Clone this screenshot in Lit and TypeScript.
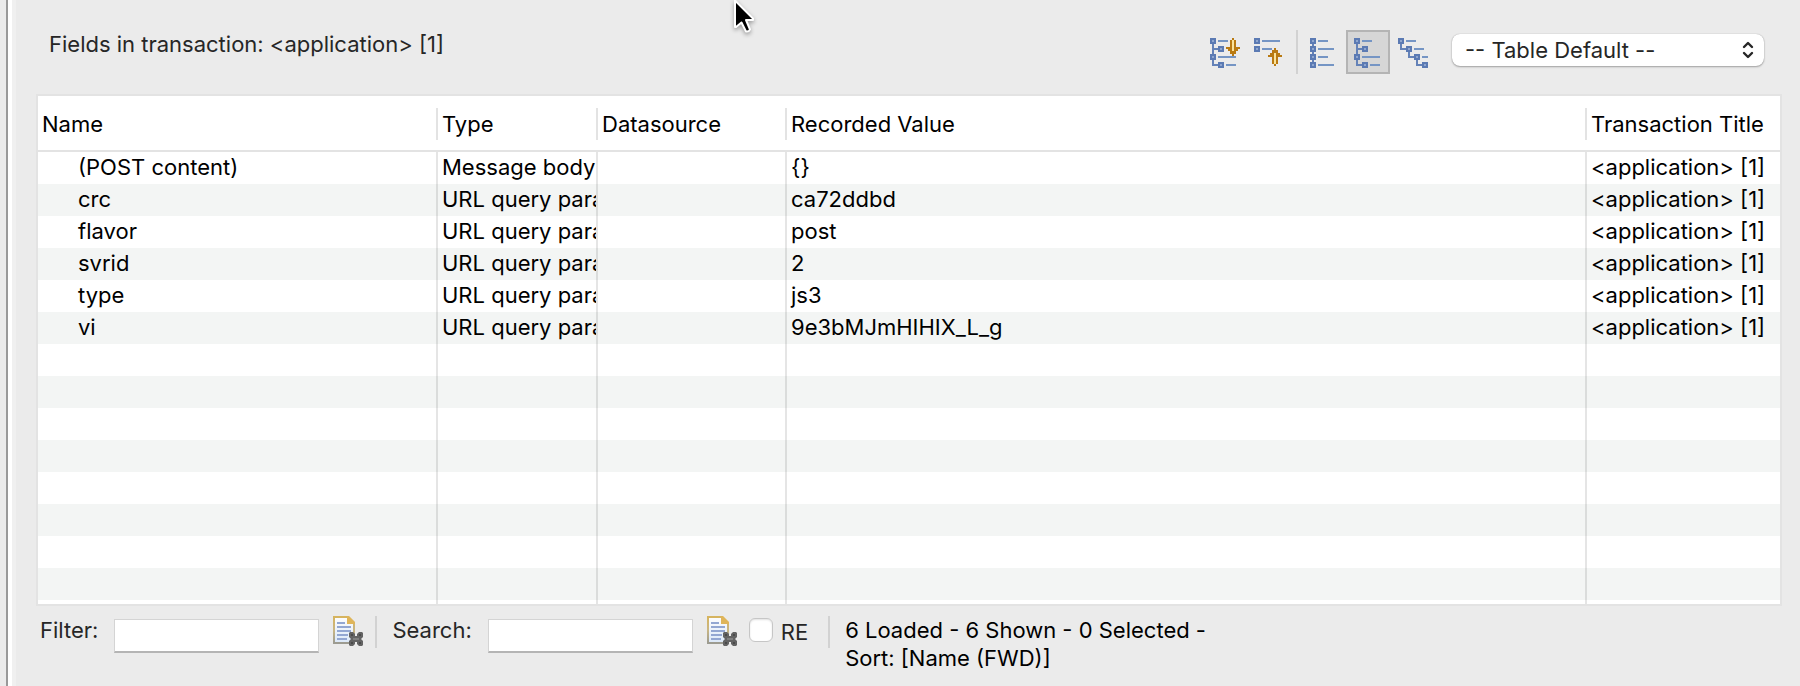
import { LitElement, html, svg, css, nothing } from "lit";
import { customElement, property, state } from "lit/decorators.js";
import { classMap } from "lit/directives/class-map.js";

interface Field {
  name: string;
  type: string;
  datasource: string;
  value: string;
  title: string;
}

const TITLE = "<application> [1]";
const QUERY = "URL query parameter";

const FIELDS: Field[] = [
  { name: "(POST content)", type: "Message body", datasource: "", value: "{}", title: TITLE },
  { name: "crc", type: QUERY, datasource: "", value: "ca72ddbd", title: TITLE },
  { name: "flavor", type: QUERY, datasource: "", value: "post", title: TITLE },
  { name: "svrid", type: QUERY, datasource: "", value: "2", title: TITLE },
  { name: "type", type: QUERY, datasource: "", value: "js3", title: TITLE },
  { name: "vi", type: QUERY, datasource: "", value: "9e3bMJmHIHIX_L_g", title: TITLE },
];

const VISIBLE_ROWS = 14;

// Building blocks of the tree icons: a node box, a caption dash and connectors.
const node = (x: number, y: number) => svg`
  <rect x=${x + 1} y=${y + 1} width="4" height="4" fill="#8fa6cf" stroke="#5b7ab3" stroke-width="2"></rect>`;
const dash = (x: number, y: number, w: number) => svg`
  <rect x=${x} y=${y} width=${w} height="2" fill="#7595c4"></rect>`;
const link = (d: string) => svg`
  <path d=${d} fill="none" stroke="#6482b8" stroke-width="2"></path>`;

const treeShape = svg`
  ${link("M5 6V29H12M5 13H12")}
  ${node(2, 2)}${node(10, 10)}${node(2, 18)}${node(10, 26)}
  ${dash(10, 4, 10)}${dash(10, 20, 18)}${dash(18, 28, 10)}`;

const ICONS = {
  expand: svg`
    ${treeShape}
    <path d="M24 2H26V4H28V11H32V13H30V15H28V18H26V20H24V18H22V15H20V13H18V11H22V4H24Z" fill="#b97a12"></path>
    <path d="M24 4H26V15H24Z" fill="#fbe39a"></path>`,
  collapse: svg`
    ${node(2, 2)}${node(2, 10)}
    ${dash(10, 4, 18)}${dash(10, 12, 10)}
    <path d="M22 30H24V28H26V21H30V19H28V17H26V14H24V12H22V14H20V17H18V19H16V21H20V28H22Z" fill="#b97a12"></path>
    <path d="M22 17H24V28H22Z" fill="#fbe39a"></path>`,
  flat: svg`
    ${link("M5 6V28")}
    ${node(2, 2)}${node(2, 10)}${node(2, 18)}${node(2, 26)}
    ${dash(10, 4, 10)}${dash(10, 12, 16)}${dash(10, 20, 10)}${dash(10, 28, 16)}`,
  tree: treeShape,
  cascade: svg`
    ${link("M5 6V13H12M13 13V21H20M21 21V29H28")}
    ${node(2, 2)}${node(10, 10)}${node(18, 18)}${node(26, 26)}
    ${dash(10, 4, 10)}${dash(18, 12, 10)}${dash(26, 20, 6)}`,
};

type IconName = keyof typeof ICONS;

@customElement("tool-button")
export class ToolButton extends LitElement {
  @property() icon: IconName = "tree";
  @property() label = "";
  @property({ type: Boolean }) active = false;

  static styles = css`
    :host {
      display: block;
    }
    .button {
      display: block;
      box-sizing: border-box;
      padding: 4px;
      border: 2px solid transparent;
      background: none;
    }
    .button.active {
      border-color: #b4b4b4;
      background: #d6d6d6;
    }
    .icon {
      display: block;
    }
  `;

  render() {
    return html`<button
      class=${classMap({ button: true, active: this.active })}
      type="button"
      aria-label=${this.label}
      aria-pressed=${this.active ? "true" : "false"}
    >
      <svg class="icon" width="32" height="32" viewBox="0 0 32 32" aria-hidden="true">${ICONS[this.icon]}</svg>
    </button>`;
  }
}

@customElement("clear-button")
export class ClearButton extends LitElement {
  @property() label = "";

  static styles = css`
    :host {
      display: block;
    }
    .button {
      display: block;
      padding: 0;
      border: 0;
      background: none;
    }
    .icon {
      display: block;
    }
  `;

  render() {
    return html`<button class="button" type="button" aria-label=${this.label}>
      <svg class="icon" width="32" height="32" viewBox="0 0 32 32" aria-hidden="true">
        <defs>
          <linearGradient id="edge" x1="0" y1="0" x2="0" y2="1">
            <stop offset="0" stop-color="#d6b45f"></stop>
            <stop offset="0.5" stop-color="#c9b684"></stop>
            <stop offset="1" stop-color="#9c9b91"></stop>
          </linearGradient>
          <linearGradient id="sheet" x1="0" y1="0" x2="0" y2="1">
            <stop offset="0" stop-color="#fdfdfd"></stop>
            <stop offset="1" stop-color="#dbe8f8"></stop>
          </linearGradient>
        </defs>
        <path d="M3 1H17L23 7V27H3Z" fill="url(#sheet)" stroke="url(#edge)" stroke-width="2"></path>
        <path d="M16 0H18L24 6V8H16Z" fill="#dfb55a"></path>
        <path d="M6 7H14M6 11H20M6 15H20M6 19H17M6 23H16" stroke="#93a7d2" stroke-width="2"></path>
        <path
          d="M19 16H22L24 18V20H26V18L28 16H31L32 17V21L30 23L32 25V29L31 30H28L26 28V26H24V28L22 30H19L18 29V25L20 23L18 21V17Z"
          fill="#636363"
        ></path>
        <path d="M20 18H22V20H20ZM28 18H30V20H28ZM20 26H22V28H20ZM28 26H30V28H28Z" fill="#4a4a4a"></path>
        <path d="M22 22H28V24H22Z" fill="#808080"></path>
      </svg>
    </button>`;
  }
}

@customElement("field-table")
export class FieldTable extends LitElement {
  @property({ attribute: false }) fields: Field[] = [];
  @property({ type: Number }) rows = 0;

  static styles = css`
    :host {
      display: block;
      border: 2px solid #e3e3e3;
      background: #fff;
      color: #000;
    }
    .table {
      width: 100%;
      table-layout: fixed;
      border-collapse: separate;
      border-spacing: 0;
    }
    .name {
      width: 400px;
    }
    .type {
      width: 160px;
    }
    .datasource {
      width: 189px;
    }
    .title {
      width: 193px;
    }
    .head {
      padding: 12px 0 10px 4px;
      border-bottom: 2px solid #e3e3e3;
      font-weight: 400;
      text-align: left;
    }
    .caption {
      display: block;
      height: 32px;
      line-height: 32px;
      border-right: 2px solid #e3e3e3;
      white-space: nowrap;
    }
    .head:last-child .caption {
      border-right: 0;
    }
    .cell {
      box-sizing: border-box;
      height: 32px;
      padding: 0 0 2px 4px;
      border-right: 2px solid rgba(0, 0, 0, 0.1);
      line-height: 30px;
      white-space: nowrap;
      overflow: hidden;
    }
    .cell:first-child {
      padding-left: 40px;
    }
    .cell:last-child {
      border-right: 0;
    }
    .row:nth-child(even) {
      background: #f3f5f4;
    }
    .tail {
      height: 4px;
      padding: 0;
      border-right: 2px solid rgba(0, 0, 0, 0.1);
    }
    .tail:last-child {
      border-right: 0;
    }
  `;

  render() {
    const blanks = Array.from({ length: Math.max(0, this.rows - this.fields.length) });
    const columns = [0, 1, 2, 3, 4];
    return html`<table class="table">
      <colgroup>
        <col class="name" />
        <col class="type" />
        <col class="datasource" />
        <col />
        <col class="title" />
      </colgroup>
      <thead>
        <tr>
          ${["Name", "Type", "Datasource", "Recorded Value", "Transaction Title"].map(
            (text) => html`<th class="head" scope="col"><span class="caption">${text}</span></th>`
          )}
        </tr>
      </thead>
      <tbody>
        ${this.fields.map(
          (f) => html`<tr class="row">
            ${[f.name, f.type, f.datasource, f.value, f.title].map((text) => html`<td class="cell">${text}</td>`)}
          </tr>`
        )}
        ${blanks.map(
          () => html`<tr class="row" aria-hidden="true">
            ${columns.map(() => html`<td class="cell"></td>`)}
          </tr>`
        )}
      </tbody>
      <tfoot aria-hidden="true">
        <tr>
          ${columns.map(() => html`<td class="tail"></td>`)}
        </tr>
      </tfoot>
    </table>`;
  }
}

@customElement("app-root")
export class AppRoot extends LitElement {
  @state() private mode: IconName = "tree";

  static styles = css`
    :host {
      display: flex;
      position: relative;
      min-height: 100vh;
      background: #ebebeb;
      color: #262626;
      font-family: Inter, "Liberation Sans", sans-serif;
      font-size: 22px;
      line-height: 28px;
    }
    .rail {
      flex: none;
      width: 6px;
      border-right: 2px solid #999;
    }
    .panel {
      flex: 1;
      min-width: 0;
      padding: 0 18px 0 24px;
      border-left: 4px solid #fff;
      box-shadow: inset 4px 0 #f0f0f0;
    }
    .header {
      display: flex;
      align-items: flex-start;
      padding: 30px 18px 20px 13px;
    }
    .heading {
      flex: 1;
      margin: 0;
      font-size: 22px;
      font-weight: 400;
    }
    .tools {
      display: flex;
      margin-right: 18px;
    }
    .rule {
      width: 2px;
      margin: 0 4px 0 6px;
      background: #d2d2d2;
    }
    .picker {
      display: grid;
      align-items: center;
      width: 312px;
      margin-top: 4px;
    }
    .select {
      grid-area: 1 / 1;
      appearance: none;
      height: 32px;
      padding: 0 32px 0 13px;
      border: 0;
      border-radius: 8px;
      background: #fff;
      box-shadow: 0 0 1px rgba(0, 0, 0, 0.3), 0 1px 2px rgba(0, 0, 0, 0.3);
      color: #262626;
      font: inherit;
    }
    .chevrons {
      grid-area: 1 / 1;
      justify-self: end;
      margin-right: 10px;
      pointer-events: none;
    }
    .footer {
      display: flex;
      align-items: flex-start;
      padding: 10px 0 16px 4px;
    }
    .label {
      padding-right: 16px;
    }
    .input {
      box-sizing: border-box;
      width: 205px;
      height: 34px;
      margin: 3px 12px 0 0;
      padding: 0 6px;
      border: 1px solid #d4d4d4;
      border-bottom: 2px solid #b4b4b4;
      border-radius: 0;
      background: #fff;
      font: inherit;
    }
    .split {
      width: 2px;
      height: 32px;
      margin: 0 15px 0 12px;
      background: #d2d2d2;
    }
    .regex {
      display: flex;
      gap: 8px;
      margin: 2px 8px 0 12px;
    }
    .check {
      appearance: none;
      width: 24px;
      height: 24px;
      margin: 0;
      border: 1px solid #c6c6c6;
      border-radius: 6px;
      background: #fff;
      box-shadow: inset 0 1px 2px rgba(0, 0, 0, 0.12);
      box-sizing: border-box;
    }
    .status {
      margin: 0;
      color: #000;
    }
    .pointer {
      position: absolute;
      top: 0;
      left: 730px;
      pointer-events: none;
      filter: drop-shadow(0 2px 2px rgba(0, 0, 0, 0.35));
    }
  `;

  private tool(icon: IconName, label: string, selectable = true) {
    return html`<tool-button
      icon=${icon}
      label=${label}
      ?active=${this.mode === icon}
      @click=${selectable ? () => (this.mode = icon) : nothing}
    ></tool-button>`;
  }

  render() {
    return html`
      <div class="rail"></div>
      <main class="panel">
        <header class="header">
          <h1 class="heading">Fields in transaction: ${TITLE}</h1>
          <div class="tools" role="toolbar" aria-label="View">
            ${this.tool("expand", "Expand all", false)} ${this.tool("collapse", "Collapse all", false)}
            <span class="rule"></span>
            ${this.tool("flat", "Flat list")} ${this.tool("tree", "Tree")} ${this.tool("cascade", "Full tree")}
          </div>
          <div class="picker">
            <select class="select" aria-label="Table layout">
              <option>-- Table Default --</option>
            </select>
            <svg class="chevrons" width="12" height="18" viewBox="0 0 12 18" aria-hidden="true">
              <path
                d="M2 6L6 2L10 6M2 12L6 16L10 12"
                fill="none"
                stroke="#262626"
                stroke-width="2.4"
                stroke-linecap="round"
                stroke-linejoin="round"
              ></path>
            </svg>
          </div>
        </header>
        <field-table .fields=${FIELDS} .rows=${VISIBLE_ROWS}></field-table>
        <footer class="footer">
          <label class="label" for="filter">Filter:</label>
          <input class="input" id="filter" type="text" />
          <clear-button label="Clear filter"></clear-button>
          <span class="split"></span>
          <label class="label" for="search">Search:</label>
          <input class="input" id="search" type="text" />
          <clear-button label="Clear search"></clear-button>
          <div class="regex">
            <input class="check" id="regex" type="checkbox" />
            <label for="regex">RE</label>
          </div>
          <span class="split"></span>
          <p class="status">6 Loaded - 6 Shown - 0 Selected -<br />Sort: [Name (FWD)]</p>
        </footer>
      </main>
      <svg class="pointer" width="28" height="36" viewBox="0 0 28 36" aria-hidden="true">
        <path
          d="M5 0.5L23 18.5V20H16L20 29.5Q19 32 16 31.5L11.500 22.500L6 27H5Z"
          fill="#000"
          stroke="#fff"
          stroke-width="2"
          stroke-linejoin="round"
        ></path>
      </svg>
    `;
  }
}
